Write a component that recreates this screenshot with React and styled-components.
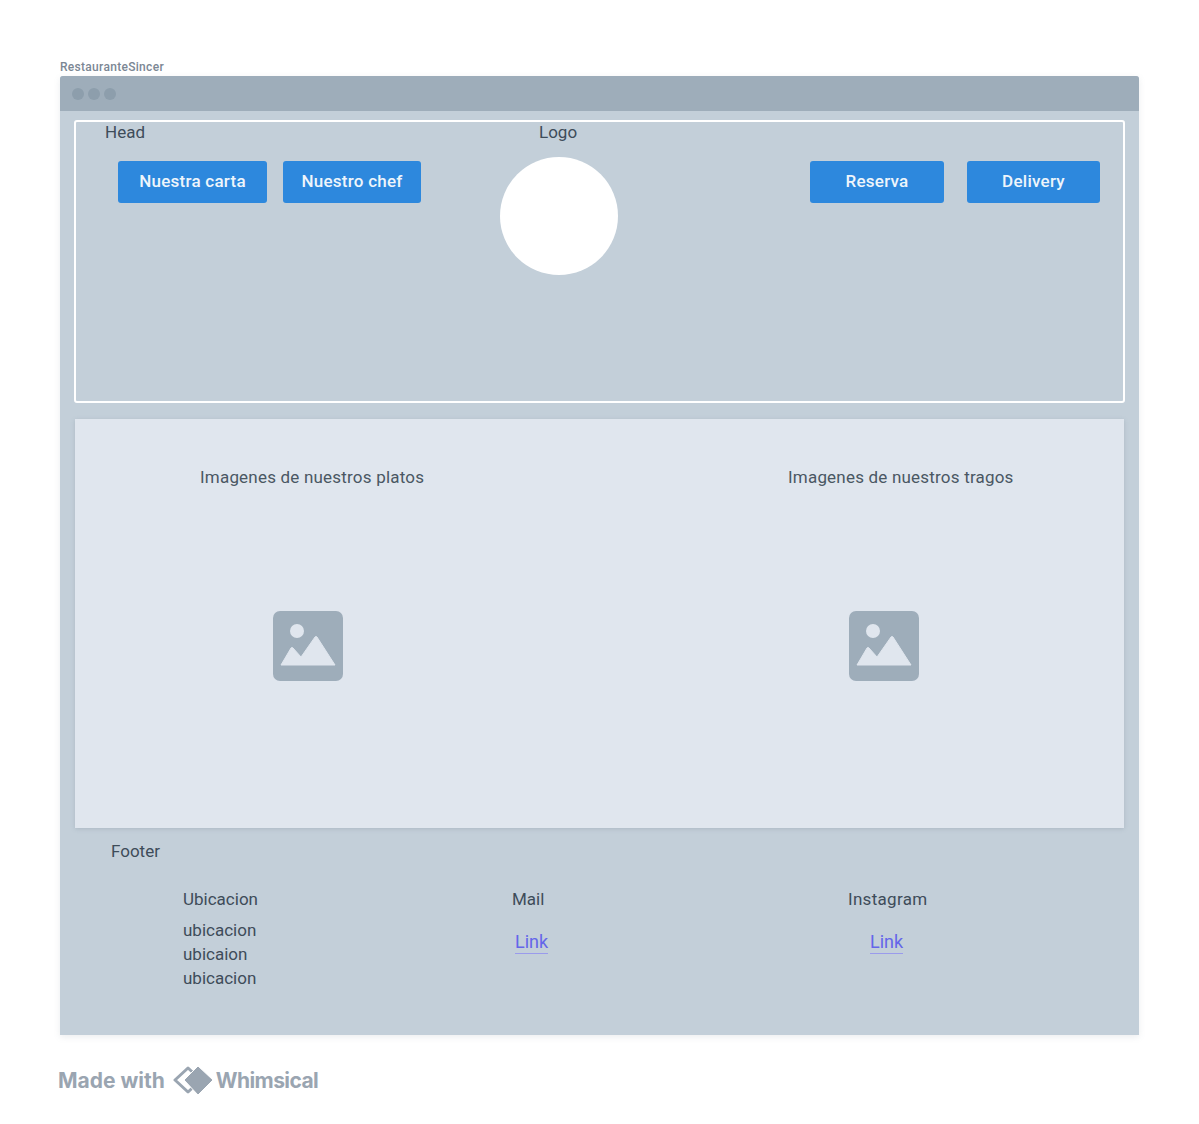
import React from "react";
import styled, { createGlobalStyle } from "styled-components";

const GlobalStyle = createGlobalStyle`
	html, body {
		margin: 0;
		padding: 0;
		background: #fff;
		font-family: "Roboto", "Liberation Sans", sans-serif;
	}
`;

const Page = styled.div`
	width: 1199px;
	height: 1124px;
	box-sizing: border-box;
	padding: 60px 60px 0;
	overflow: hidden;
`;

const BoardTitle = styled.div`
	height: 16px;
	font-size: 12px;
	line-height: 15px;
	font-weight: 500;
	letter-spacing: 0.3px;
	color: #7b8794;
`;

const Browser = styled.div`
	width: 1079px;
	height: 959px;
	background: #c3cfd9;
	border-radius: 3px 3px 0 0;
	box-shadow: 0 2px 6px rgba(123, 135, 148, 0.15);
	display: flex;
	flex-direction: column;
`;

const TitleBar = styled.div`
	height: 35px;
	flex-shrink: 0;
	background: #9eadba;
	border-radius: 3px 3px 0 0;
	display: flex;
	align-items: center;
	gap: 4px;
	padding-left: 12px;
`;

const Dot = styled.span`
	width: 12px;
	height: 12px;
	border-radius: 50%;
	background: #8d9eac;
`;

const Head = styled.header`
	width: 1051px;
	height: 283px;
	margin: 9px 0 0 14px;
	box-sizing: border-box;
	border: 2px solid #fff;
	border-radius: 3px;
	display: grid;
	grid-template-columns: 424px 310px 1fr;
`;

const Label = styled.div`
	font-size: 17px;
	line-height: 22px;
	color: #3e4c59;
	letter-spacing: ${(p) => p.$track || 0}px;
	margin-left: ${(p) => p.$indent || 0}px;
`;

const HeadLabel = styled(Label)`
	line-height: 20px;
`;

const ButtonRow = styled.div`
	display: flex;
	gap: ${(p) => p.$gap}px;
	margin-top: ${(p) => p.$top}px;
	margin-left: ${(p) => p.$left || 0}px;
`;

const Button = styled.button`
	width: ${(p) => p.$width}px;
	height: 42px;
	padding: 0 0 2px;
	border: none;
	border-radius: 3px;
	background: #2d88dd;
	color: #eef5fb;
	font-family: inherit;
	font-size: 17px;
	font-weight: 500;
	letter-spacing: 0.25px;
`;

const LogoCircle = styled.div`
	width: 118px;
	height: 118px;
	margin-top: 15px;
	border-radius: 50%;
	background: #fff;
`;

const Gallery = styled.section`
	width: 1049px;
	height: 409px;
	margin: 16px 0 0 15px;
	flex-shrink: 0;
	background: #e0e6ee;
	box-shadow: 0 1px 4px rgba(123, 135, 148, 0.3);
	display: grid;
	grid-template-columns: 576px 1fr;
`;

const GalleryColumn = styled.div`
	padding-top: 47px;
`;

const GalleryLabel = styled(Label)`
	color: #4a5763;
	letter-spacing: 0.2px;
`;

const PictureIcon = styled.svg`
	display: block;
	width: 70px;
	height: 70px;
	margin: 123px 0 0 198px;
`;

const Footer = styled.footer`
	padding: 12px 0 0 51px;
`;

const FooterColumns = styled.div`
	display: grid;
	grid-template-columns: 329px 336px 1fr;
	margin: 26px 0 0 72px;
`;

const FooterLines = styled.div`
	margin-top: 8px;
	font-size: 17px;
	line-height: 24px;
	color: #3e4c59;
`;

const FooterLink = styled.a`
	display: inline-block;
	margin: 21px 0 0 ${(p) => p.$indent}px;
	font-size: 18px;
	line-height: 22px;
	color: #6466e9;
	border-bottom: 1px solid #9a9bec;
`;

const MadeWith = styled.div`
	display: flex;
	align-items: center;
	gap: 8px;
	margin: 28px 0 0 -2px;
	height: 34px;
	font-family: "Inter", "Liberation Sans", sans-serif;
	font-size: 21px;
	font-weight: 700;
	color: #9aa5b1;
`;

const BrandName = styled.span`
	letter-spacing: -0.6px;
`;

const WhimsicalMark = styled.svg`
	width: 41px;
	height: 32px;
	flex-shrink: 0;
	margin-right: -6px;
`;

const Picture = () => (
	<PictureIcon viewBox="0 0 70 70">
		<rect width="70" height="70" rx="7" fill="#9eadba" />
		<circle cx="24" cy="20" r="7" fill="#e0e6ee" />
		<path
			d="M8 54 L18 37 Q19 36 20 37 L28 46 L42 26 Q43 25 44 26 L62 54 Z"
			fill="#e0e6ee"
			stroke="#e0e6ee"
			strokeWidth="1"
			strokeLinejoin="round"
		/>
	</PictureIcon>
);

const App = () => (
	<Page>
		<GlobalStyle />
		<BoardTitle>RestauranteSincer</BoardTitle>
		<Browser>
			<TitleBar>
				<Dot />
				<Dot />
				<Dot />
			</TitleBar>
			<Head>
				<div>
					<HeadLabel $indent={29}>Head</HeadLabel>
					<ButtonRow $gap={16} $top={19} $left={42}>
						<Button $width={149}>Nuestra carta</Button>
						<Button $width={138}>Nuestro chef</Button>
					</ButtonRow>
				</div>
				<div>
					<HeadLabel $indent={39}>Logo</HeadLabel>
					<LogoCircle />
				</div>
				<ButtonRow $gap={23} $top={39}>
					<Button $width={134}>Reserva</Button>
					<Button $width={133}>Delivery</Button>
				</ButtonRow>
			</Head>
			<Gallery>
				<GalleryColumn>
					<GalleryLabel $indent={125}>Imagenes de nuestros platos</GalleryLabel>
					<Picture />
				</GalleryColumn>
				<GalleryColumn>
					<GalleryLabel $indent={137}>Imagenes de nuestros tragos</GalleryLabel>
					<Picture />
				</GalleryColumn>
			</Gallery>
			<Footer>
				<Label>Footer</Label>
				<FooterColumns>
					<div>
						<Label>Ubicacion</Label>
						<FooterLines>
							ubicacion
							<br />
							ubicaion
							<br />
							ubicacion
						</FooterLines>
					</div>
					<div>
						<Label>Mail</Label>
						<FooterLink $indent={3}>Link</FooterLink>
					</div>
					<div>
						<Label $track={0.3}>Instagram</Label>
						<FooterLink $indent={22}>Link</FooterLink>
					</div>
				</FooterColumns>
			</Footer>
		</Browser>
		<MadeWith>
			<span>Made with</span>
			<WhimsicalMark viewBox="0 0 41 32">
				<path
					d="M15 4 L2 16 L15 28 L28 16 Z"
					fill="none"
					stroke="#9aa5b1"
					strokeWidth="3"
					strokeLinejoin="round"
				/>
				<path
					d="M25 2 L40 16 L25 31 L11 16 Z"
					fill="#9aa5b1"
					stroke="#fff"
					strokeWidth="1"
					strokeLinejoin="round"
				/>
			</WhimsicalMark>
			<BrandName>Whimsical</BrandName>
		</MadeWith>
	</Page>
);

export default App;
